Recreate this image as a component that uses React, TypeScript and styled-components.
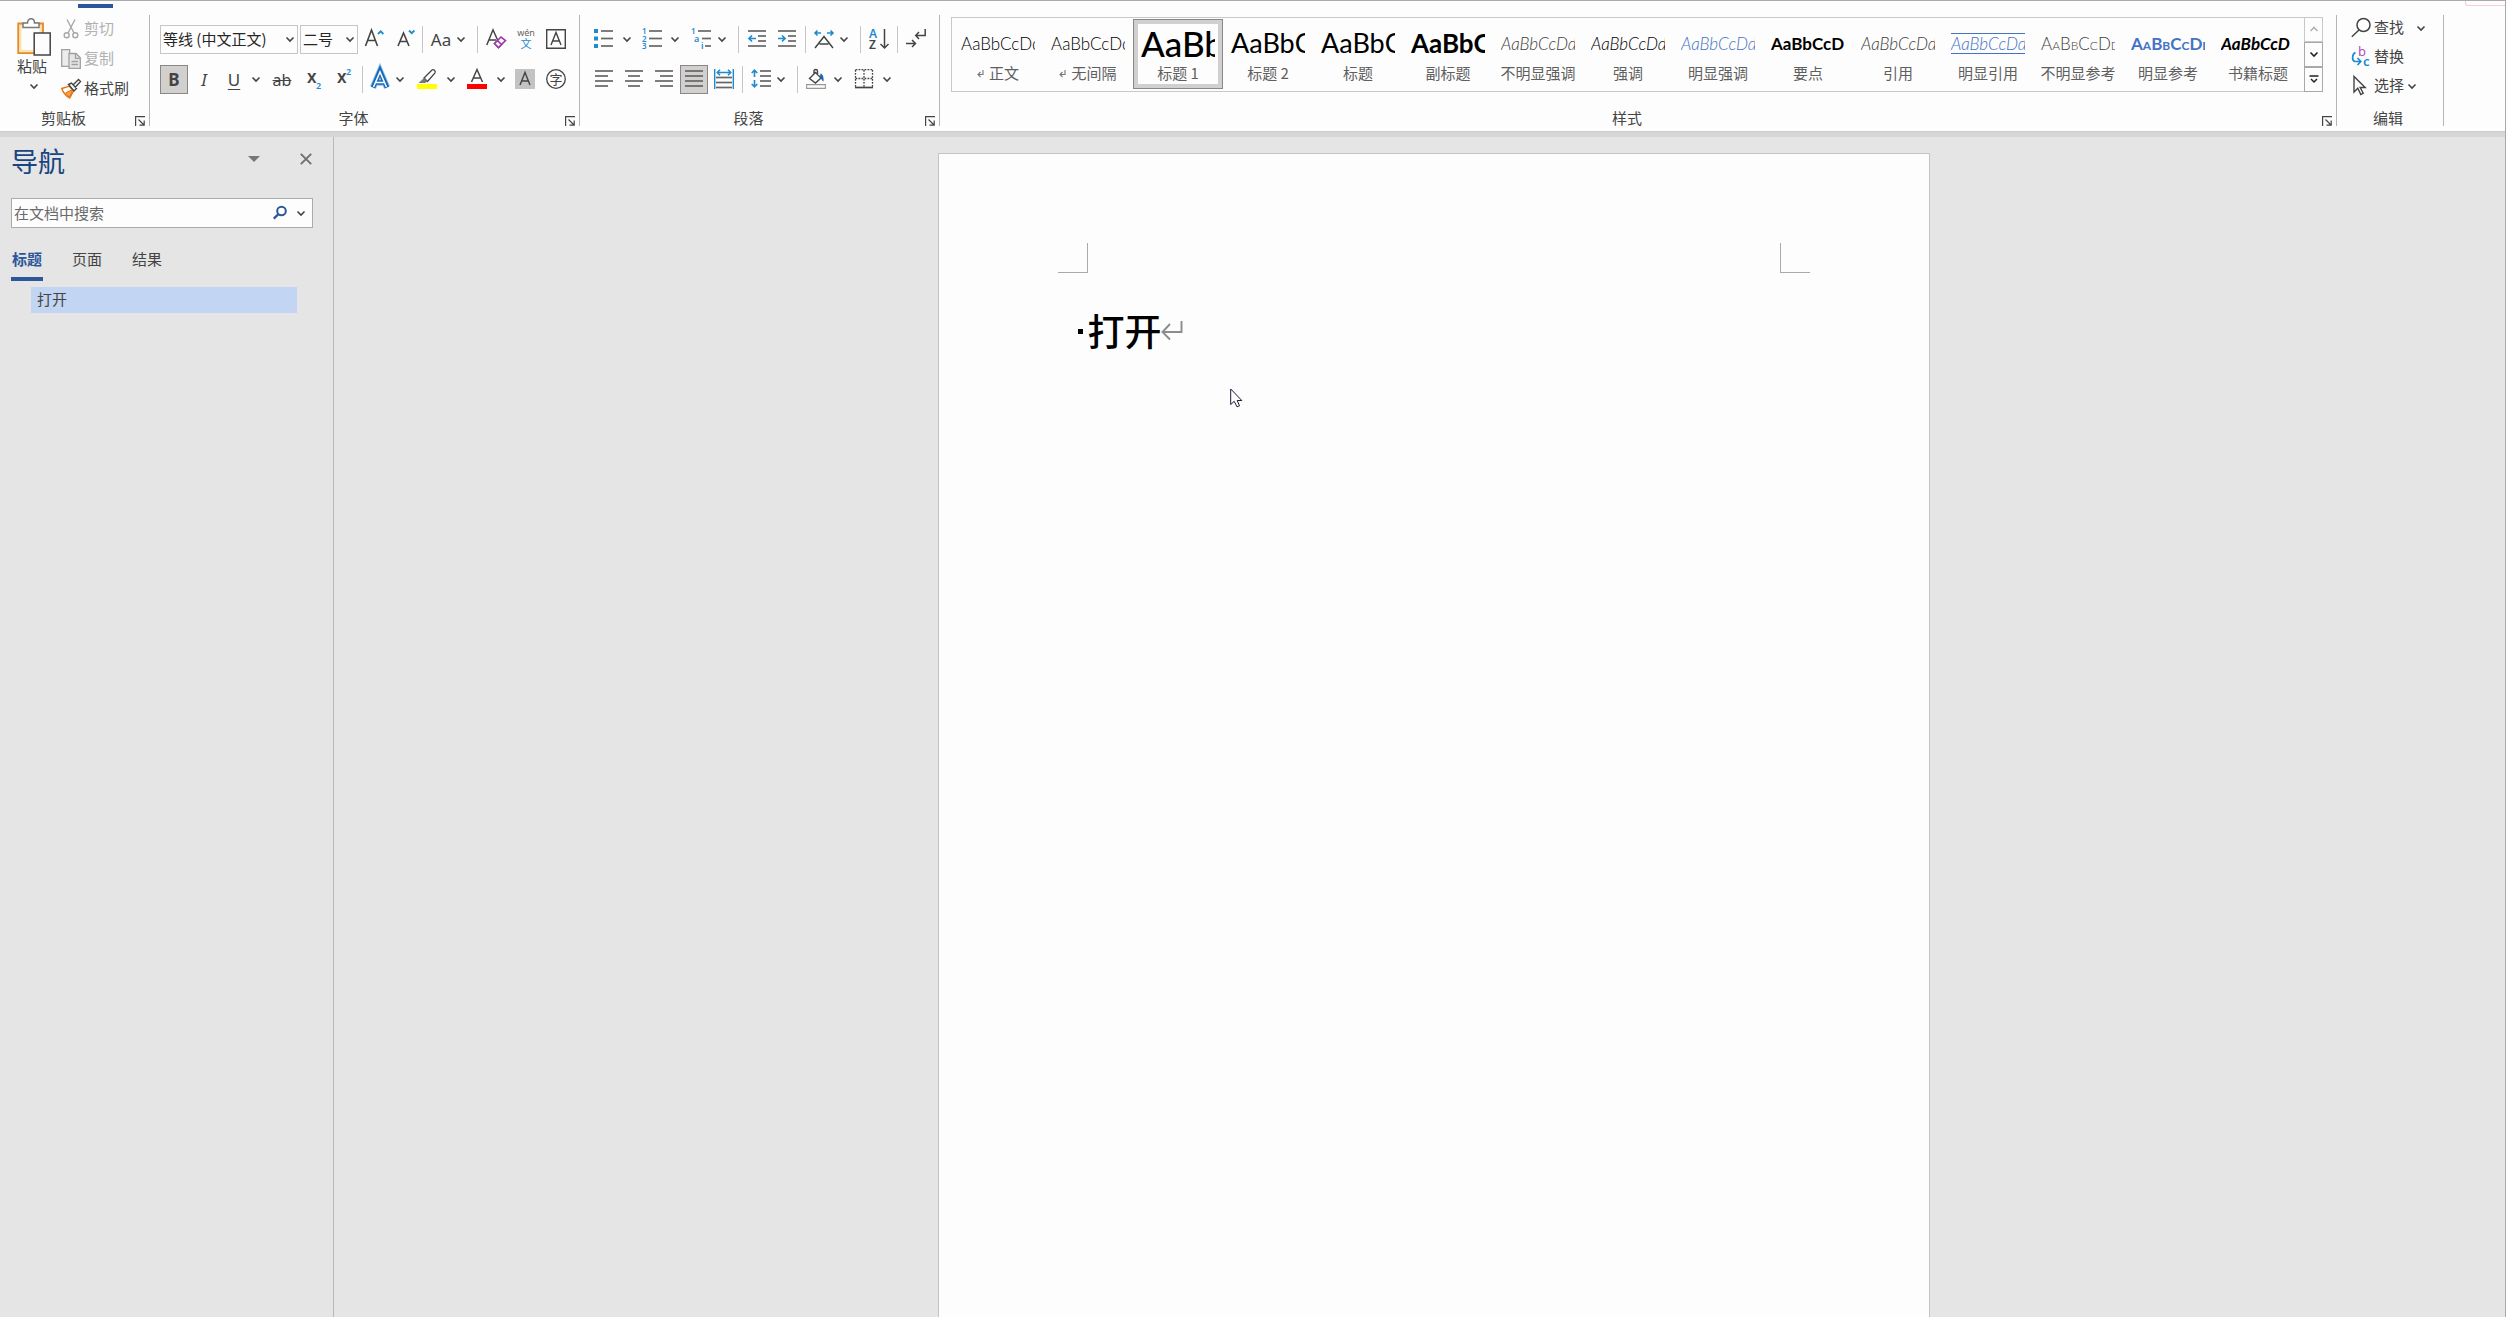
import React from 'react';
import styled, { createGlobalStyle, css } from 'styled-components';

const ink = '#444444';
const blue = '#2b579a';
const sky = '#1e8bcd';
const line = '#666666';

const GlobalStyle = createGlobalStyle`
  * { box-sizing: border-box; }
  body {
    margin: 0;
    background: #e5e5e5;
    color: ${ink};
    font-family: "Noto Sans CJK SC", sans-serif;
    font-size: 15px;
    line-height: 20px;
  }
  button, select, input { font: inherit; color: inherit; }
  button {
    display: flex;
    align-items: center;
    padding: 0;
    border: 0;
    background: transparent;
    cursor: default;
  }
`;

const Shell = styled.div`
  display: flex;
  flex-direction: column;
  min-height: 100vh;
  border-top: 1px solid #a9a9a9;
  border-right: 1px solid #a9a9a9;
`;

/* ---------- ribbon ---------- */

const Ribbon = styled.header`
  background: #fdfdfd;
  padding-bottom: 5px;
`;

const TabStrip = styled.div`
  display: flex;
  justify-content: space-between;
  height: 14px;
`;

const ActiveTabMark = styled.div`
  width: 35px;
  height: 4px;
  margin: 3px 0 0 78px;
  background: ${blue};
`;

const ShareEdge = styled.div`
  width: 40px;
  height: 5px;
  border: solid #f3cfd6;
  border-width: 0 0 1px 1px;
  border-bottom-left-radius: 3px;
`;

const Groups = styled.div`
  display: flex;
  height: 111px;
`;

const Group = styled.section<{ $width?: number }>`
  display: flex;
  flex-direction: column;
  flex: ${p => (p.$width ? `0 0 ${p.$width}px` : '1 1 0')};
  min-width: 0;
  border-right: 1px solid #b5b5b5;
`;

const RibbonTail = styled.div`
  flex: 0 0 61px;
`;

const GroupBody = styled.div`
  flex: 1;
  min-height: 0;
`;

const GroupFooter = styled.div`
  display: flex;
  align-items: flex-end;
  height: 16px;
  padding-right: 4px;
`;

const GroupTitle = styled.h2`
  flex: 1;
  margin: 0;
  font-size: 15px;
  font-weight: 400;
  line-height: 16px;
  text-align: center;
`;

const Icon = styled.svg`
  flex: none;
  display: block;
  fill: none;
  stroke-linecap: butt;
  overflow: visible;
`;

const ToolRows = styled(GroupBody)`
  display: flex;
  flex-direction: column;
  gap: 11px;
  padding: 10px 0 0 10px;
`;

const ToolRow = styled.div`
  display: flex;
  height: 29px;
`;

const Tool = styled.button<{ $width?: number; $on?: boolean }>`
  justify-content: center;
  flex: none;
  width: ${p => p.$width ?? 28}px;
  height: 29px;
  margin-right: 2px;
  ${p => p.$on && css`
    background: #d2d0ce;
    border: 1px solid #8a8886;
  `}
`;

const SplitBox = styled.div`
  display: flex;
  margin-right: 2px;
`;

const SplitPart = styled.button<{ $width: number }>`
  justify-content: center;
  width: ${p => p.$width}px;
  height: 29px;
`;

const Divider = styled.span<{ $lead?: boolean }>`
  flex: none;
  width: 1px;
  height: 27px;
  margin: 1px 4px 0 ${p => (p.$lead ? 8 : 2)}px;
  background: #c8c6c4;
`;

const Combo = styled.div<{ $width: number }>`
  display: grid;
  align-items: center;
  flex: none;
  width: ${p => p.$width}px;
  height: 29px;
  margin-right: 2px;
  border: 1px solid #c6c6c6;

  select {
    grid-area: 1 / 1;
    appearance: none;
    width: 100%;
    height: 27px;
    padding: 0 18px 2px 2px;
    border: 0;
    background: transparent;
    color: #262626;
  }
  svg {
    grid-area: 1 / 1;
    justify-self: end;
    margin-right: 2px;
    pointer-events: none;
  }
`;

const Glyph = styled.span<{ $size?: number; $bold?: boolean; $italic?: boolean; $underline?: boolean; $strike?: boolean }>`
  font-family: "Noto Sans", sans-serif;
  font-size: ${p => p.$size ?? 17}px;
  font-weight: ${p => (p.$bold ? 700 : 400)};
  font-style: ${p => (p.$italic ? 'italic' : 'normal')};
  text-decoration: ${p => (p.$underline ? 'underline' : p.$strike ? 'line-through' : 'none')};
  text-underline-offset: 3px;
  line-height: 24px;
  white-space: nowrap;
`;

const SvgText = styled.text<{ $size: number; $bold?: boolean }>`
  font-family: "Noto Sans", "Noto Sans CJK SC", sans-serif;
  font-size: ${p => p.$size}px;
  font-weight: ${p => (p.$bold ? 600 : 400)};
`;

/* clipboard */

const ClipboardBody = styled(GroupBody)`
  display: flex;
  padding-top: 3px;
`;

const PasteButton = styled.button`
  flex-direction: column;
  width: 34px;
  margin: 0 10px 0 17px;
`;

const PasteLabel = styled.span`
  align-self: flex-start;
  margin-bottom: 7px;
  white-space: nowrap;
`;

const CommandList = styled.div<{ $gap: number }>`
  display: flex;
  flex-direction: column;
  align-items: flex-start;
  gap: ${p => p.$gap}px;
`;

const Command = styled.button<{ $space?: number }>`
  gap: 3px;
  height: 22px;
  color: ${ink};
  white-space: nowrap;
  &:disabled { color: #b1b1b1; }
  span { padding-bottom: 2px; }
  span + svg { margin-left: ${p => p.$space ?? 0}px; }
`;

/* styles gallery */

const GalleryBody = styled(GroupBody)`
  padding: 2px 13px 0 11px;
`;

const Gallery = styled.div`
  display: flex;
  height: 75px;
  border: 1px solid #c8c8c8;
  border-right: 0;
`;

const StyleList = styled.div`
  display: flex;
  flex: 1;
  min-width: 0;
  padding: 1px;
`;

const StyleCell = styled.button<{ $on?: boolean }>`
  flex: 1 1 0;
  flex-direction: column;
  min-width: 0;
  height: 70px;
  padding: 4px 8px 0;
  ${p => p.$on && css`
    padding: 3px 7px 0;
    border: 1px solid #8a8886;
    box-shadow: inset 0 0 0 4px #d2d0ce;
  `}
`;

type Look = {
  size?: number;
  color?: string;
  weight?: number;
  italic?: boolean;
  caps?: boolean;
  ruled?: boolean;
};

const PreviewArea = styled.span`
  display: flex;
  align-items: center;
  width: 100%;
  height: 40px;
  overflow: hidden;
`;

const Preview = styled.span<{ $look: Look }>`
  width: 100%;
  font-family: Lato, sans-serif;
  font-size: ${p => p.$look.size ?? 17}px;
  font-weight: ${p => p.$look.weight ?? 300};
  font-style: ${p => (p.$look.italic ? 'italic' : 'normal')};
  font-variant-caps: ${p => (p.$look.caps ? 'small-caps' : 'normal')};
  color: ${p => p.$look.color ?? '#000000'};
  line-height: ${p => (p.$look.size ? 36 : 19)}px;
  text-align: left;
  white-space: nowrap;
  overflow: hidden;
  ${p => p.$look.ruled && css`
    border: solid #4472c4;
    border-width: 1px 0;
  `}
`;

const StyleName = styled.span`
  display: flex;
  align-items: center;
  gap: 5px;
  color: #5f5f5f;
  white-space: nowrap;
`;

const GalleryScroll = styled.div`
  display: flex;
  flex-direction: column;
  width: 19px;
  margin: -1px 0;
`;

const ScrollButton = styled.button<{ $dim?: boolean }>`
  flex: 1;
  justify-content: center;
  border: 1px solid ${p => (p.$dim ? '#c8c8c8' : '#aba9a7')};
`;

/* editing */

const EditingBody = styled(GroupBody)`
  padding: 2px 0 0 14px;
`;

/* ---------- workspace ---------- */

const RibbonShadow = styled.div`
  height: 6px;
  background: #d6d6d6;
  border-top: 1px solid #cccccc;
`;

const Workspace = styled.div`
  display: flex;
  flex: 1;
`;

const NavPane = styled.aside`
  flex: 0 0 334px;
  padding: 8px 19px 0 11px;
  border-right: 1px solid #b8b8b8;
`;

const NavHeader = styled.div`
  display: flex;
  align-items: flex-start;
  gap: 32px;
  height: 32px;
  margin-bottom: 21px;
`;

const NavTitle = styled.h1`
  flex: 1;
  margin: 0;
  font-size: 27px;
  font-weight: 400;
  line-height: 32px;
  color: #17457f;
`;

const PaneButton = styled.button<{ $width: number }>`
  justify-content: center;
  width: ${p => p.$width}px;
  height: 28px;
`;

const SearchBox = styled.form`
  display: flex;
  align-items: center;
  width: 302px;
  height: 30px;
  padding: 0 4px 0 2px;
  border: 1px solid #ababab;
  background: #fdfdfd;

  input {
    flex: 1;
    min-width: 0;
    height: 28px;
    padding: 0 0 2px;
    border: 0;
    outline: 0;
    background: transparent;
  }
  input::placeholder { color: #6a6a6a; opacity: 1; }
`;

const TabList = styled.div`
  display: flex;
  gap: 28px;
  margin-top: 21px;
`;

const Tab = styled.button<{ $on?: boolean }>`
  align-items: flex-start;
  width: 32px;
  height: 32px;
  padding: 0 1px;
  white-space: nowrap;
  ${p => p.$on && css`
    color: ${blue};
    font-weight: 700;
    border-bottom: 4px solid ${blue};
  `}
`;

const Outline = styled.ul`
  margin: 6px 17px 0 20px;
  padding: 0;
  list-style: none;
`;

const OutlineLink = styled.a`
  display: block;
  height: 26px;
  padding-left: 6px;
  background: #c2d5f2;
  color: ${ink};
  line-height: 24px;
  text-decoration: none;
`;

const Canvas = styled.main`
  position: relative;
  display: flex;
  flex: 1;
  justify-content: center;
  padding: 16px 0 0 28px;
`;

const Page = styled.article`
  width: 992px;
  padding: 89px 119px 0;
  border: 1px solid #c4c4c4;
  border-bottom: 0;
  background: #fdfdfd;
`;

const MarginMarks = styled.div`
  display: flex;
  justify-content: space-between;
`;

const CropMark = styled.span<{ $side: 'left' | 'right' }>`
  width: 30px;
  height: 30px;
  border: solid #a9a9a9;
  border-width: ${p => (p.$side === 'left' ? '0 1px 1px 0' : '0 0 1px 1px')};
`;

const Heading = styled.h1`
  display: flex;
  align-items: center;
  margin: 33px 0 0 20px;
  color: #000000;
  font-size: 37px;
  font-weight: 500;
  line-height: 48px;
`;

const HeadingBullet = styled.span`
  width: 5px;
  height: 5px;
  margin-right: 5px;
  background: #000000;
`;

const HeadingText = styled.span`
  padding-bottom: 2px;
`;

const Pointer = styled(Icon)`
  position: absolute;
  left: 896px;
  top: 251px;
`;

/* ---------- icons ---------- */

const Chevron = ({ color = ink }: { color?: string }) => (
  <Icon width="10" height="7" viewBox="0 0 10 7" stroke={color} strokeWidth="1.6">
    <path d="M1.5 1.5 5 5l3.5-3.5" />
  </Icon>
);

const LauncherButton = styled.button`
  width: 18px;
  height: 10px;
  padding-left: 8px;
`;

const Launcher = () => (
  <LauncherButton type="button" aria-label="更多选项">
    <Icon width="10" height="10" viewBox="0 0 10 10" stroke={ink} strokeWidth="1.2">
      <path d="M.6 10V.6H10M3.5 3.5 9 9M9.2 4.5v4.7H4.5" />
    </Icon>
  </LauncherButton>
);

const Lines = ({ rows }: { rows: [number, number, number][] }) => (
  <g stroke={line} strokeWidth="1.7">
    {rows.map(([x1, x2, y], i) => <path key={i} d={`M${x1} ${y}H${x2}`} />)}
  </g>
);

const Box20 = ({ children }: { children: React.ReactNode }) => (
  <Icon width="20" height="21" viewBox="0 0 20 21">{children}</Icon>
);

const PasteIcon = () => (
  <Icon width="34" height="38" viewBox="0 0 34 38">
    <path d="M1.2 5.500H26v29.6H1.2z" fill="#fbe3b0" stroke="#e38b29" strokeWidth="1.8" />
    <path d="M4.5 8.500h18v23.5h-18z" fill="#fdfdfd" />
    <path d="M6 9.500V5h4.5C10.500 2.500 12 .8 14 .8s3.500 1.700 3.500 4.200H22v4.500z" fill="#fdfdfd" stroke="#7a7a7a" strokeWidth="1.5" />
    <path d="M17.200 15h16v22h-16z" fill="#fdfdfd" stroke="#444" strokeWidth="1.5" />
  </Icon>
);

const CutIcon = () => (
  <Icon width="20" height="20" viewBox="0 0 20 20" stroke="#a8a8a8" strokeWidth="1.4">
    <path d="M6 .5 13 14M14 .5 7 14" />
    <circle cx="5.700" cy="16.300" r="2.500" />
    <circle cx="14.300" cy="16.300" r="2.500" />
  </Icon>
);

const CopyIcon = () => (
  <Icon width="20" height="20" viewBox="0 0 20 20" stroke="#a0a0a0" strokeWidth="1.3">
    <path d="M.7.700h8v16.600h-8z" fill="#ececec" />
    <path d="M8 4.500h7l4.300 4.300v10.500H8z" fill="#e6e6e6" />
    <path d="M14.500 4.500v4.800h4.800M10.500 12.500h6.500M10.500 15.500h6.500" />
  </Icon>
);

const PainterIcon = () => (
  <Icon width="20" height="20" viewBox="0 0 20 20">
    <path d="m.8 9.500 7.500-2.300 4.200 4.600-3.800 7.200c-3.600-2-6.600-5.500-7.900-9.500z" fill="#fdfdfd" stroke="#e8710a" strokeWidth="1.400" />
    <path d="m4.500 14 7-3.500-3 8z" fill="#f7a14a" stroke="#e8710a" />
    <path d="m7.500 5.500 3-1.500 5 5.500-2.500 2.500zM12 6l5.500-5.500 2 2L14 8.500" fill="#fdfdfd" stroke="#444" strokeWidth="1.400" />
  </Icon>
);

const GrowIcon = ({ down }: { down?: boolean }) => (
  <Icon width="20" height="21" viewBox="0 0 20 21">
    <path d={down ? 'M4 17 9.500 4 15 17M5.800 12.500h7.400' : 'M1.500 17 7.500 1l6 16M3.800 11.500h7.400'} stroke={ink} strokeWidth="1.600" />
    <path d={down ? 'm15 1.500 2.700 2.700 2.700-2.700' : 'm14 5 2.700-2.700L19.400 5'} stroke={sky} strokeWidth="1.800" />
  </Icon>
);

const ClearFormatIcon = () => (
  <Box20>
    <path d="M.8 16 7 .8 12 12M3 11h7" stroke={ink} strokeWidth="1.500" />
    <path d="m8.500 14.500 6.500-6.500 4.500 3.500-7 7z" fill="#fdfdfd" stroke="#9b3aa8" strokeWidth="1.600" />
    <path d="m8.500 14.500 4 4 3-3-4-3.800z" fill="#fdfdfd" stroke="#9b3aa8" strokeWidth="1.600" />
  </Box20>
);

const PinyinIcon = () => (
  <Box20>
    <SvgText $size={9} x="10" y="7" textAnchor="middle" fill="#666">wén</SvgText>
    <SvgText $size={11} x="10" y="19" textAnchor="middle" fill={sky}>文</SvgText>
  </Box20>
);

const BoxedAIcon = () => (
  <Box20>
    <path d="M.7.700h18.600v18.600H.7z" stroke={ink} strokeWidth="1.400" />
    <path d="M5 16 10 3.500 15 16M6.700 12h6.600" stroke={ink} strokeWidth="1.400" />
  </Box20>
);

const ShadedAIcon = () => (
  <Box20>
    <path d="M0 0h20v20H0z" fill="#c3c3c3" />
    <path d="M5 16 10 3.500 15 16M6.700 12h6.600" stroke={ink} strokeWidth="1.400" />
  </Box20>
);

const CircledIcon = () => (
  <Box20>
    <circle cx="10" cy="10" r="9.300" stroke={ink} strokeWidth="1.300" />
    <SvgText $size={13} x="10" y="15" textAnchor="middle" fill={ink}>字</SvgText>
  </Box20>
);

const EffectIcon = () => (
  <Box20>
    <path d="M3 18.500 10 2 17 18.500M6 13.500h8" stroke="#8fc1e8" strokeWidth="6.500" />
    <path d="M3 18.500 10 2 17 18.500M6 13.500h8" stroke="#1668b8" strokeWidth="4.600" />
    <path d="M3.500 18 10 3 16.500 18M6 13.500h8" stroke="#fdfdfd" strokeWidth="1.500" />
  </Box20>
);

const HighlightIcon = () => (
  <Box20>
    <path d="m7 9 8-8c1.500-1 4 .8 3 2.800l-7.500 8.700z" fill="#fdfdfd" stroke={ink} strokeWidth="1.300" />
    <path d="m7 9 3.500 3.500L8 14H1.500z" fill="#777" />
    <path d="M0 15h20v5H0z" fill="#ffff00" />
  </Box20>
);

const FontColorIcon = () => (
  <Box20>
    <path d="M4.500 13 10 .5 15.500 13M6.300 9h7.400" stroke={ink} strokeWidth="1.500" />
    <path d="M0 15h20v5H0z" fill="#ff0000" />
  </Box20>
);

const BulletsIcon = () => (
  <Box20>
    <path d="M0 0h4v4H0zM0 7.500h4v4H0zM0 15h4v4H0z" fill={sky} />
    <Lines rows={[[7, 19, 2], [7, 19, 9.5], [7, 19, 17]]} />
  </Box20>
);

const NumbersIcon = () => (
  <Box20>
    {['1', '2', '3'].map((n, i) => (
      <SvgText key={n} $size={8} $bold x="0" y={5 + i * 7.5} fill={sky}>{n}</SvgText>
    ))}
    <Lines rows={[[7, 20, 2], [7, 20, 9.5], [7, 20, 17]]} />
  </Box20>
);

const MultilevelIcon = () => (
  <Box20>
    <SvgText $size={8} $bold x="0" y="5" fill={sky}>1</SvgText>
    <SvgText $size={9} $bold x="3" y="13" fill={sky}>a</SvgText>
    <SvgText $size={9} $bold x="10" y="20" fill={sky}>i</SvgText>
    <Lines rows={[[7, 20, 2], [11, 20, 9.5], [14, 20, 17]]} />
  </Box20>
);

const IndentIcon = ({ inward }: { inward?: boolean }) => (
  <Box20>
    <Lines rows={[[1, 19, 2], [11, 19, 7], [11, 19, 12], [1, 19, 17]]} />
    <path d={inward ? 'M1 9.500h7M5 6.500l3 3-3 3' : 'M9 9.500H2M5 6.500l-3 3 3 3'} stroke={sky} strokeWidth="1.700" />
  </Box20>
);

const AsianLayoutIcon = () => (
  <Box20>
    <path d="M1 19 10 7.500 19 19M5.500 15h9" stroke={ink} strokeWidth="1.500" />
    <path d="M7 4H1M3.500 1.500 1 4l2.500 2.500M13 4h6M16.500 1.500 19 4l-2.500 2.500" stroke={sky} strokeWidth="1.600" />
  </Box20>
);

const SortIcon = () => (
  <Box20>
    <SvgText $size={12} $bold x="0" y="8.500" fill={sky}>A</SvgText>
    <SvgText $size={12} $bold x="0" y="20" fill={ink}>Z</SvgText>
    <path d="M15.500 0v19M11.500 15l4 4 4-4" stroke={ink} strokeWidth="1.500" />
  </Box20>
);

const MarksIcon = () => (
  <Box20>
    <path d="M19.200 0v6.500H10M13 3 9.700 6.500 13 10M0 14.500h9M6 11l3.500 3.500L6 18" stroke={ink} strokeWidth="1.500" />
  </Box20>
);

const AlignIcon = ({ kind }: { kind: 'left' | 'center' | 'right' | 'justify' }) => {
  const short: [number, number] =
    kind === 'left' ? [1, 14] : kind === 'center' ? [4, 16] : kind === 'right' ? [6, 19] : [1, 19];
  return (
    <Box20>
      <Lines rows={[[1, 19, 2], [...short, 7], [1, 19, 12], [...short, 17]]} />
    </Box20>
  );
};

const DistributeIcon = () => (
  <Box20>
    <path d="M.7 0v20M19.300 0v20" stroke={sky} strokeWidth="1.400" />
    <path d="M3 3.500h14M6 .7 3.200 3.500 6 6.300M14 .7l2.800 2.800L14 6.300" stroke={sky} strokeWidth="1.500" />
    <Lines rows={[[2, 18, 8.5], [2, 18, 13.5], [2, 18, 18.5]]} />
  </Box20>
);

const SpacingIcon = () => (
  <Box20>
    <path d="M3.500 1v7M.7 4 3.500 1.200 6.300 4M3.500 11v7M.7 15l2.800 2.800L6.300 15" stroke={sky} strokeWidth="1.600" />
    <Lines rows={[[9, 20, 2], [9, 20, 7], [9, 20, 12], [9, 20, 17]]} />
  </Box20>
);

const BucketIcon = () => (
  <Box20>
    <path d="m3.500 9.500 6-6 5.500 5.500-5.500 5zM8 6V2c0-2 3.500-2 3.500 0v4" stroke={ink} strokeWidth="1.400" />
    <path d="M14.500 4.500c2 .5 3.500 3 3 8-1.500-1-2.500-2.500-3.500-5z" fill="#1668b8" />
    <path d="M.6 15.600h18.800v3.800H.6z" stroke="#999" strokeWidth="1.100" />
  </Box20>
);

const BordersIcon = () => (
  <Box20>
    <path d="M1.500.700h17M1.500 9.500h17M1.500 1v17M10 1v17M18.500 1v17" stroke={ink} strokeWidth="1.300" strokeDasharray="1.800 1.200" />
    <path d="M1 18.500h18" stroke={ink} strokeWidth="1.700" />
  </Box20>
);

const FindIcon = () => (
  <Icon width="20" height="20" viewBox="0 0 20 20" stroke={ink} strokeWidth="1.500">
    <circle cx="12.500" cy="7" r="6.500" />
    <path d="M8 12 .8 18.700" />
  </Icon>
);

const ReplaceIcon = () => (
  <Icon width="20" height="20" viewBox="0 0 20 20">
    <SvgText $size={13} x="7" y="9" fill="#b04fb8">b</SvgText>
    <SvgText $size={13} $bold x="12" y="19" fill={sky}>c</SvgText>
    <path d="M4.500 5.500C1 7 .5 13.500 4 14.500h5.500M6.500 11 9.800 14.500 6.500 18" stroke={sky} strokeWidth="1.700" />
  </Icon>
);

const SelectIcon = () => (
  <Icon width="20" height="20" viewBox="0 0 20 20">
    <path d="M3 .5v15.500l3.800-3.800 3 6.300 2.400-1.200-3-5.800h5z" fill="#fdfdfd" stroke={ink} strokeWidth="1.400" />
  </Icon>
);

const ReturnMark = () => (
  <Icon width="7" height="8" viewBox="0 0 7 8" stroke="#777" strokeWidth="1.100">
    <path d="M6 1v4.500H1M3.500 3 1 5.500 3.500 8" />
  </Icon>
);

/* ---------- composed parts ---------- */

const Split = ({ label, iconWidth = 28, arrowWidth = 12, children }: {
  label: string; iconWidth?: number; arrowWidth?: number; children: React.ReactNode;
}) => (
  <SplitBox>
    <SplitPart type="button" aria-label={label} $width={iconWidth}>{children}</SplitPart>
    <SplitPart type="button" aria-label={`${label}选项`} $width={arrowWidth}><Chevron /></SplitPart>
  </SplitBox>
);

const Footer = ({ title, launcher = true }: { title: string; launcher?: boolean }) => (
  <GroupFooter>
    <GroupTitle>{title}</GroupTitle>
    {launcher && <Launcher />}
  </GroupFooter>
);

const styleItems: { name: string; sample?: string; look: Look; mark?: boolean; on?: boolean }[] = [
  { name: '正文', look: {}, mark: true },
  { name: '无间隔', look: {}, mark: true },
  { name: '标题 1', sample: 'AaBb', look: { size: 35, weight: 500 }, on: true },
  { name: '标题 2', sample: 'AaBbC', look: { size: 27, weight: 400 } },
  { name: '标题', sample: 'AaBbC', look: { size: 27, weight: 400 } },
  { name: '副标题', sample: 'AaBbC', look: { size: 26, weight: 700 } },
  { name: '不明显强调', look: { italic: true, color: '#404040' } },
  { name: '强调', look: { italic: true } },
  { name: '明显强调', look: { italic: true, color: '#4472c4' } },
  { name: '要点', sample: 'AaBbCcD', look: { weight: 700 } },
  { name: '引用', look: { italic: true, color: '#404040' } },
  { name: '明显引用', look: { italic: true, color: '#4472c4', ruled: true } },
  { name: '不明显参考', look: { caps: true, color: '#404040' } },
  { name: '明显参考', look: { caps: true, weight: 700, color: '#4472c4' } },
  { name: '书籍标题', sample: 'AaBbCcD', look: { italic: true, weight: 700 } },
];

const ClipboardGroup = () => (
  <Group $width={150}>
    <ClipboardBody>
      <PasteButton type="button">
        <PasteIcon />
        <PasteLabel>粘贴</PasteLabel>
        <Chevron />
      </PasteButton>
      <CommandList $gap={8}>
        <Command type="button" disabled><CutIcon /><span>剪切</span></Command>
        <Command type="button" disabled><CopyIcon /><span>复制</span></Command>
        <Command type="button"><PainterIcon /><span>格式刷</span></Command>
      </CommandList>
    </ClipboardBody>
    <Footer title="剪贴板" />
  </Group>
);

const FontGroup = () => (
  <Group $width={430}>
    <ToolRows>
      <ToolRow>
        <Combo $width={138}>
          <select aria-label="字体"><option>等线 (中文正文)</option></select>
          <Chevron />
        </Combo>
        <Combo $width={58}>
          <select aria-label="字号"><option>二号</option></select>
          <Chevron />
        </Combo>
        <Tool type="button" aria-label="增大字号"><GrowIcon /></Tool>
        <Tool type="button" aria-label="减小字号"><GrowIcon down /></Tool>
        <Divider />
        <Split label="更改大小写"><Glyph>Aa</Glyph></Split>
        <Divider $lead />
        <Tool type="button" aria-label="清除所有格式"><ClearFormatIcon /></Tool>
        <Tool type="button" aria-label="拼音指南"><PinyinIcon /></Tool>
        <Tool type="button" aria-label="字符边框"><BoxedAIcon /></Tool>
      </ToolRow>
      <ToolRow>
        <Tool type="button" aria-label="加粗" $on><Glyph $bold>B</Glyph></Tool>
        <Tool type="button" aria-label="倾斜"><Glyph $italic>I</Glyph></Tool>
        <Split label="下划线" arrowWidth={16}><Glyph $underline>U</Glyph></Split>
        <Tool type="button" aria-label="删除线" $width={32}><Glyph $size={16} $strike>ab</Glyph></Tool>
        <Tool type="button" aria-label="下标" $width={30}>
          <Box20>
            <SvgText $size={17} $bold x="2" y="14" fill={ink}>x</SvgText>
            <SvgText $size={9} $bold x="11" y="20" fill={sky}>2</SvgText>
          </Box20>
        </Tool>
        <Tool type="button" aria-label="上标" $width={26}>
          <Box20>
            <SvgText $size={17} $bold x="2" y="14" fill={ink}>x</SvgText>
            <SvgText $size={9} $bold x="11" y="6" fill={sky}>2</SvgText>
          </Box20>
        </Tool>
        <Divider />
        <Split label="文本效果" iconWidth={26} arrowWidth={14}><EffectIcon /></Split>
        <Split label="突出显示" iconWidth={36}><HighlightIcon /></Split>
        <Split label="字体颜色" iconWidth={36}><FontColorIcon /></Split>
        <Tool type="button" aria-label="字符底纹" $width={32}><ShadedAIcon /></Tool>
        <Tool type="button" aria-label="带圈字符" $width={26}><CircledIcon /></Tool>
      </ToolRow>
    </ToolRows>
    <Footer title="字体" />
  </Group>
);

const ParagraphGroup = () => (
  <Group $width={360}>
    <ToolRows>
      <ToolRow>
        <Split label="项目符号" arrowWidth={18}><BulletsIcon /></Split>
        <Split label="编号" arrowWidth={18}><NumbersIcon /></Split>
        <Split label="多级列表" iconWidth={30}><MultilevelIcon /></Split>
        <Divider $lead />
        <Tool type="button" aria-label="减少缩进量"><IndentIcon /></Tool>
        <Tool type="button" aria-label="增加缩进量"><IndentIcon inward /></Tool>
        <Divider />
        <Split label="中文版式"><AsianLayoutIcon /></Split>
        <Divider $lead />
        <Tool type="button" aria-label="排序"><SortIcon /></Tool>
        <Divider />
        <Tool type="button" aria-label="显示编辑标记"><MarksIcon /></Tool>
      </ToolRow>
      <ToolRow>
        <Tool type="button" aria-label="左对齐"><AlignIcon kind="left" /></Tool>
        <Tool type="button" aria-label="居中"><AlignIcon kind="center" /></Tool>
        <Tool type="button" aria-label="右对齐"><AlignIcon kind="right" /></Tool>
        <Tool type="button" aria-label="两端对齐" $on><AlignIcon kind="justify" /></Tool>
        <Tool type="button" aria-label="分散对齐"><DistributeIcon /></Tool>
        <Divider />
        <Split label="行和段落间距"><SpacingIcon /></Split>
        <Divider $lead />
        <Split label="底纹" arrowWidth={16}><BucketIcon /></Split>
        <Split label="边框" iconWidth={32} arrowWidth={14}><BordersIcon /></Split>
      </ToolRow>
    </ToolRows>
    <Footer title="段落" />
  </Group>
);

const StylesGroup = () => (
  <Group>
    <GalleryBody>
      <Gallery>
        <StyleList>
          {styleItems.map(item => (
            <StyleCell key={item.name} type="button" $on={item.on}>
              <PreviewArea><Preview $look={item.look}>{item.sample ?? 'AaBbCcDd'}</Preview></PreviewArea>
              <StyleName>{item.mark && <ReturnMark />}{item.name}</StyleName>
            </StyleCell>
          ))}
        </StyleList>
        <GalleryScroll>
          <ScrollButton type="button" aria-label="上一行" $dim>
            <Icon width="10" height="7" viewBox="0 0 10 7" stroke="#b1b1b1" strokeWidth="1.600">
              <path d="M1.500 5 5 1.500 8.500 5" />
            </Icon>
          </ScrollButton>
          <ScrollButton type="button" aria-label="下一行"><Chevron color="#222" /></ScrollButton>
          <ScrollButton type="button" aria-label="其他样式">
            <Icon width="10" height="9" viewBox="0 0 10 9" stroke="#222" strokeWidth="1.500">
              <path d="M.5 1h9M2 4l3 3 3-3" />
            </Icon>
          </ScrollButton>
        </GalleryScroll>
      </Gallery>
    </GalleryBody>
    <Footer title="样式" />
  </Group>
);

const EditingGroup = () => (
  <Group $width={107}>
    <EditingBody>
      <CommandList $gap={7}>
        <Command type="button" $space={9}><FindIcon /><span>查找</span><Chevron /></Command>
        <Command type="button"><ReplaceIcon /><span>替换</span></Command>
        <Command type="button"><SelectIcon /><span>选择</span><Chevron /></Command>
      </CommandList>
    </EditingBody>
    <Footer title="编辑" launcher={false} />
  </Group>
);

const Navigation = () => (
  <NavPane>
    <NavHeader>
      <NavTitle>导航</NavTitle>
      <PaneButton type="button" aria-label="窗格选项" $width={24}>
        <Icon width="12" height="6" viewBox="0 0 12 6"><path d="M0 0h12L6 6z" fill="#777" /></Icon>
      </PaneButton>
      <PaneButton type="button" aria-label="关闭" $width={16}>
        <Icon width="12" height="12" viewBox="0 0 12 12" stroke="#6f6f6f" strokeWidth="1.900">
          <path d="m.8.800 10.400 10.400M11.200.800.800 11.200" />
        </Icon>
      </PaneButton>
    </NavHeader>
    <SearchBox role="search" onSubmit={e => e.preventDefault()}>
      <input type="text" aria-label="在文档中搜索" placeholder="在文档中搜索" />
      <PaneButton type="submit" aria-label="搜索" $width={28}>
        <Icon width="14" height="14" viewBox="0 0 14 14" stroke={blue} strokeWidth="2">
          <circle cx="8.500" cy="5" r="4.300" />
          <path d="m5.500 8-4.700 4.700" strokeWidth="2.400" />
        </Icon>
      </PaneButton>
      <PaneButton type="button" aria-label="搜索选项" $width={14}><Chevron /></PaneButton>
    </SearchBox>
    <TabList role="tablist">
      <Tab type="button" role="tab" aria-selected $on>标题</Tab>
      <Tab type="button" role="tab">页面</Tab>
      <Tab type="button" role="tab">结果</Tab>
    </TabList>
    <Outline>
      <li><OutlineLink href="#heading">打开</OutlineLink></li>
    </Outline>
  </NavPane>
);

const Document = () => (
  <Canvas>
    <Page>
      <MarginMarks>
        <CropMark $side="left" />
        <CropMark $side="right" />
      </MarginMarks>
      <Heading id="heading">
        <HeadingBullet />
        <HeadingText>打开</HeadingText>
        <Icon width="22" height="20" viewBox="0 0 22 20" stroke="#8c8c8c" strokeWidth="1.900">
          <path d="M19.500 0v11H.5M8 3 .5 11 8 18.500" />
        </Icon>
      </Heading>
    </Page>
    <Pointer width="13" height="20" viewBox="0 0 13 20">
      <path d="M.7 1v15.500l3.500-3.200 2.800 5.500 2.500-1-2.300-5.300h4.600z" fill="#fff" stroke="#1a1a3a" />
    </Pointer>
  </Canvas>
);

export default function App() {
  return (
    <Shell>
      <GlobalStyle />
      <Ribbon>
        <TabStrip>
          <ActiveTabMark />
          <ShareEdge />
        </TabStrip>
        <Groups>
          <ClipboardGroup />
          <FontGroup />
          <ParagraphGroup />
          <StylesGroup />
          <EditingGroup />
          <RibbonTail />
        </Groups>
      </Ribbon>
      <RibbonShadow />
      <Workspace>
        <Navigation />
        <Document />
      </Workspace>
    </Shell>
  );
}
